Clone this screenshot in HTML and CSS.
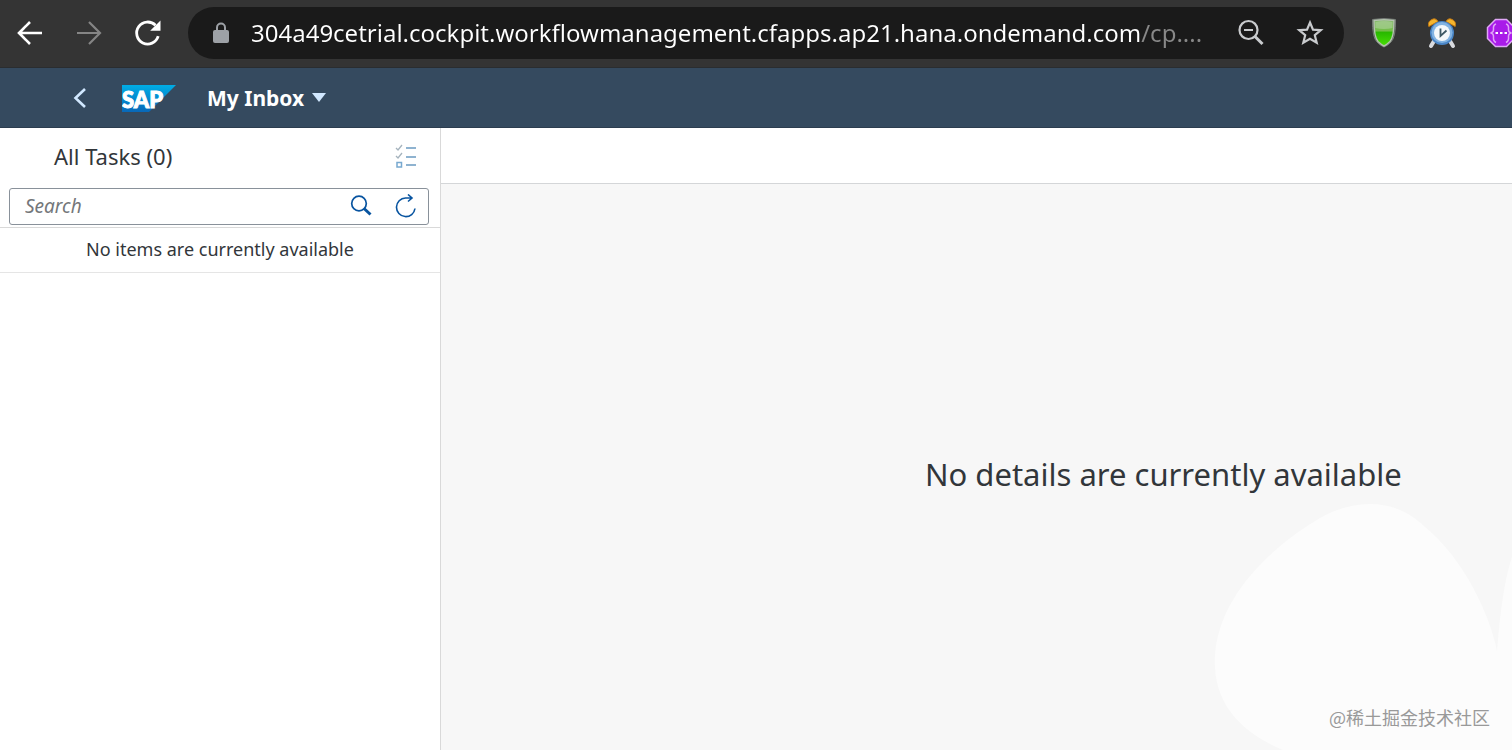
FILE: index.html
```html
<!DOCTYPE html>
<html lang="en">
<head>
  <meta charset="UTF-8">
  <meta name="viewport" content="width=device-width, initial-scale=1.0">
  <title>My Inbox</title>
  <link rel="stylesheet" href="styles.css">
</head>
<body>
  <div class="browser-bar">
    <button class="nav-btn" aria-label="Back">
      <svg width="26" height="26" viewBox="0 0 26 26" fill="none" stroke="#fff" stroke-width="2.600"><path d="M25 13H2.500M13 2 2 13l11 11"/></svg>
    </button>
    <button class="nav-btn" aria-label="Forward">
      <svg width="26" height="26" viewBox="0 0 26 26" fill="none" stroke="#858585" stroke-width="2.200"><path d="M1 13h22.500M13 2l11 11-11 11"/></svg>
    </button>
    <button class="nav-btn" aria-label="Reload">
      <svg width="28" height="28" viewBox="0 0 28 28"><path d="M24.200 17.200A11 11 0 1 1 21.500 6.300" fill="none" stroke="#fff" stroke-width="2.800"/><path d="M26.500 1.500v10.300H16.200z" fill="#fff"/></svg>
    </button>
    <div class="address">
      <svg class="lock" width="16" height="22" viewBox="0 0 16 22"><path d="M4 9V5.500a4 4 0 0 1 8 0V9" fill="none" stroke="#9da1a6" stroke-width="2"/><rect y="8" width="16" height="13" rx="2" fill="#9da1a6"/></svg>
      <input class="url" type="text" aria-label="Address" value="304a49cetrial.cockpit.workflowmanagement.cfapps.ap21.hana.ondemand.com/cp....">
      <button class="icon-btn" aria-label="Zoom">
        <svg width="28" height="28" viewBox="0 0 28 28" fill="none" stroke="#c9cbce"><circle cx="11.500" cy="11" r="9" stroke-width="2.200"/><path d="M7 11h9" stroke-width="2"/><path d="m18 17.500 7.500 7.500" stroke-width="3"/></svg>
      </button>
      <button class="icon-btn" aria-label="Bookmark this page">
        <svg width="28" height="28" viewBox="0 0 28 28" fill="none" stroke="#c9cbce" stroke-width="2.200"><path d="m14 3.500 3 7.100 7.800.6-6 5 1.900 7.500-6.700-4-6.700 4 1.900-7.500-6-5 7.800-.6z"/></svg>
      </button>
    </div>
    <div class="extensions">
      <button class="icon-btn" aria-label="Shield">
        <svg width="28" height="32" viewBox="0 0 28 32">
          <defs><linearGradient id="shield" x2="0" y2="1"><stop offset="0" stop-color="#86b86e"/><stop offset=".42" stop-color="#74bd49"/><stop offset=".48" stop-color="#28b800"/><stop offset="1" stop-color="#48e005"/></linearGradient></defs>
          <path d="M2.500 2.500Q14 .5 25.500 2.500q.3 18-4.500 22.500-3 3.500-7 5-4-1.500-7-5-4.800-4.500-4.500-22.500z" fill="#49534a" stroke="#777c78"/>
          <path d="M4 3.500Q14 2 24 3.500 24 20 20 24.500q-3 3-6 4.500-3-1.500-6-4.500Q4 20 4 3.500z" fill="url(#shield)" stroke="#b6c4b0" stroke-width="1.400"/>
          <path d="M5.500 5Q14 3 22.500 5v6Q14 13 5.300 11z" fill="#b5d5a3" opacity=".55"/>
        </svg>
      </button>
      <button class="icon-btn" aria-label="Alarm clock">
        <svg width="28" height="32" viewBox="0 0 28 32">
          <path d="m6 24-3 5M22 24l3 5" stroke="#d8dade" stroke-width="4" stroke-linecap="round"/>
          <path d="M.8 9.500Q-.5 5 3 3 7.500 0 10 4.500zM27.200 9.500Q28.500 5 25 3 20.500 0 18 4.500z" fill="#f5b52e" stroke="#c57b13"/>
          <circle cx="14" cy="16" r="12" fill="#4a86c7"/>
          <circle cx="14" cy="15.500" r="10.500" fill="#82b3e2"/>
          <circle cx="14" cy="16" r="8" fill="#f4f8fa"/>
          <path d="M12.500 11.500v7.500l6-5.500" fill="none" stroke="#3e5965" stroke-width="1.800"/>
        </svg>
      </button>
      <button class="icon-btn" aria-label="JSON viewer">
        <svg width="30" height="30" viewBox="0 0 30 30">
          <path d="M9.500 1.500h11l8 8v11l-8 8h-11l-8-8v-11z" fill="#a91be9" stroke="#e0a8f6" stroke-width="1.500"/>
          <path d="M10 6Q7 7 7.500 11q.3 3.500-3 4 3.300.5 3 4-.5 4 2.500 5.500M20 6q3 1 2.500 5-.3 3.500 3 4-3.300.5-3 4 .5 4-2.500 5.500" fill="none" stroke="#dfa3f7" stroke-width="1.500"/>
          <path d="M9.500 15h2.500m2 0h2.500m2 0H21" stroke="#fff" stroke-width="2"/>
        </svg>
      </button>
    </div>
  </div>

  <header class="shell">
    <button class="shell-back" aria-label="Navigate back">
      <svg width="14" height="20" viewBox="0 0 14 20" fill="none" stroke="#d1e8ff" stroke-width="2.600"><path d="M12 1 2.500 10l9.500 9"/></svg>
    </button>
    <a class="logo" href="#" aria-label="SAP home">
      <svg width="54" height="30" viewBox="0 0 54 30">
        <defs><linearGradient id="sap" x2="0" y2="1"><stop offset="0" stop-color="#00ade6"/><stop offset="1" stop-color="#0868b8"/></linearGradient></defs>
        <path d="M0 2h54L27 29H0z" fill="url(#sap)"/>
        <text class="logo-text" x="0" y="25">SAP</text>
      </svg>
    </a>
    <button class="app-title">My Inbox
      <svg width="14" height="10" viewBox="0 0 14 10"><path d="M0 0h14L7 9z" fill="#d1e8ff"/></svg>
    </button>
  </header>

  <main class="split">
    <section class="master">
      <div class="master-head">
        <h1>All Tasks (0)</h1>
        <button class="icon-btn" aria-label="Multi select">
          <svg width="22" height="24" viewBox="0 0 22 24" fill="none"><path d="M11 4h10M11 13h10M11 21h10" stroke="#8fb3d0" stroke-width="2"/><path d="m1 4 2 2 4-5M1 12l2 2 4-5" stroke="#a5b3bd" stroke-width="1.300"/><path d="M2 18.500h4.500V23H2z" stroke="#78a9d0" stroke-width="1.500"/></svg>
        </button>
      </div>
      <div class="search-row">
        <form class="search">
          <input type="search" placeholder="Search" aria-label="Search">
          <button class="icon-btn" type="button" aria-label="Search tasks">
            <svg width="22" height="22" viewBox="0 0 22 22" fill="none" stroke="#0854a0"><circle cx="9" cy="8.500" r="7.300" stroke-width="1.700"/><path d="m14 13.500 6.500 6" stroke-width="3"/></svg>
          </button>
          <button class="icon-btn" type="button" aria-label="Refresh">
            <svg width="22" height="24" viewBox="0 0 22 24" fill="none" stroke="#0854a0" stroke-width="1.600"><path d="M18 4H11.500A9.300 9.300 0 1 0 21 14.500M14 .5 18 4l-4 3.500"/></svg>
          </button>
        </form>
      </div>
      <p class="no-items">No items are currently available</p>
    </section>
    <section class="detail">
      <div class="detail-head"></div>
      <div class="detail-body">
        <p class="no-details">No details are currently available</p>
        <svg class="backdrop" width="298" height="247" viewBox="0 0 298 247" fill="#fcfcfc"><path d="M1 152C5 93 57 44 106 15c35-20 76-20 105 9 39 32 65 88 72 124q5-65 15-94v193H69Q-3 217 1 152z"/></svg>
        <span class="watermark" lang="zh-CN">@稀土掘金技术社区</span>
      </div>
    </section>
  </main>
</body>
</html>
```
FILE: styles.css
```css
* {
  box-sizing: border-box;
}
body {
  margin: 0;
  min-height: 100vh;
  display: flex;
  flex-direction: column;
  font-family: "Noto Sans", "Open Sans", sans-serif;
  color: #32363a;
  background: #fff;
  overflow-x: hidden;
}
button {
  padding: 0;
  border: none;
  background: none;
  font: inherit;
  color: inherit;
  cursor: pointer;
}
svg {
  display: block;
}
h1, p {
  margin: 0;
  font-weight: 400;
}
.nav-btn, .icon-btn {
  flex: none;
  display: flex;
  align-items: center;
  justify-content: center;
}

/* browser toolbar */
.browser-bar {
  height: 68px;
  padding: 0 0 2px 16px;
  display: flex;
  align-items: center;
  background: #343434;
  border-bottom: 1px solid #2a2d30;
  overflow: hidden;
}
.nav-btn {
  width: 28px;
  margin-right: 31px;
}
.address {
  flex: 1;
  height: 52px;
  margin: 0 26px 0 -5px;
  padding: 0 20px 0 25px;
  display: flex;
  align-items: center;
  border-radius: 26px;
  background: #1a1a1a;
}
.lock {
  flex: none;
  margin-right: 22px;
}
.url {
  flex: 1;
  min-width: 0;
  height: 40px;
  padding: 0;
  border: none;
  outline: none;
  font: 24px "Noto Sans", sans-serif;
  color: transparent;
  background: linear-gradient(to right, #fff 889px, #888 889px);
  -webkit-background-clip: text;
  background-clip: text;
}
.address .icon-btn {
  margin-left: 31px;
}
.extensions {
  display: flex;
  gap: 30px;
  margin-right: -4px;
}

/* shell header */
.shell {
  height: 60px;
  padding-left: 73px;
  display: flex;
  align-items: center;
  background: #354a5f;
  border-bottom: 1px solid #2c3d4f;
}
.logo {
  margin: 0 31px 0 35px;
}
.logo-text {
  font: 900 22px Lato, sans-serif;
  fill: #fff;
  stroke: #fff;
}
.app-title {
  display: flex;
  align-items: center;
  gap: 8px;
  font-size: 21px;
  font-weight: 700;
  color: #fff;
}

/* task list */
.split {
  flex: 1;
  display: flex;
}
.master {
  flex: none;
  width: 441px;
  border-right: 1px solid #d9d9d9;
}
.master-head {
  height: 56px;
  padding: 0 23px 0 54px;
  display: flex;
  align-items: center;
  justify-content: space-between;
}
.master-head h1 {
  font-size: 22px;
}
.search-row {
  padding: 4px 11px 2px 9px;
  border-bottom: 1px solid #d9d9d9;
}
.search {
  height: 37px;
  padding: 0 12px 2px 15px;
  display: flex;
  align-items: center;
  gap: 22px;
  border: 1px solid #89919a;
  border-radius: 3px;
}
.search input {
  flex: 1;
  min-width: 0;
  padding: 0;
  border: none;
  outline: none;
  background: none;
  font: 19px "Noto Sans", sans-serif;
}
.search input::placeholder {
  font-style: italic;
  color: #74777a;
}
.no-items {
  height: 45px;
  line-height: 43px;
  font-size: 18px;
  text-align: center;
  border-bottom: 1px solid #e5e5e5;
}

/* detail pane */
.detail {
  flex: 1;
  min-width: 0;
  display: flex;
  flex-direction: column;
}
.detail-head {
  height: 56px;
  border-bottom: 1px solid #d4d6d8;
}
.detail-body {
  position: relative;
  flex: 1;
  padding: 14px 0 0 484px;
  display: flex;
  align-items: center;
  background: #f7f7f7;
}
.no-details {
  font-size: 31px;
  white-space: nowrap;
}
.backdrop {
  position: absolute;
  right: 0;
  bottom: 0;
}
.watermark {
  position: absolute;
  right: 22px;
  bottom: 20px;
  font: 18px "Noto Sans CJK SC", sans-serif;
  color: #999;
}
```
